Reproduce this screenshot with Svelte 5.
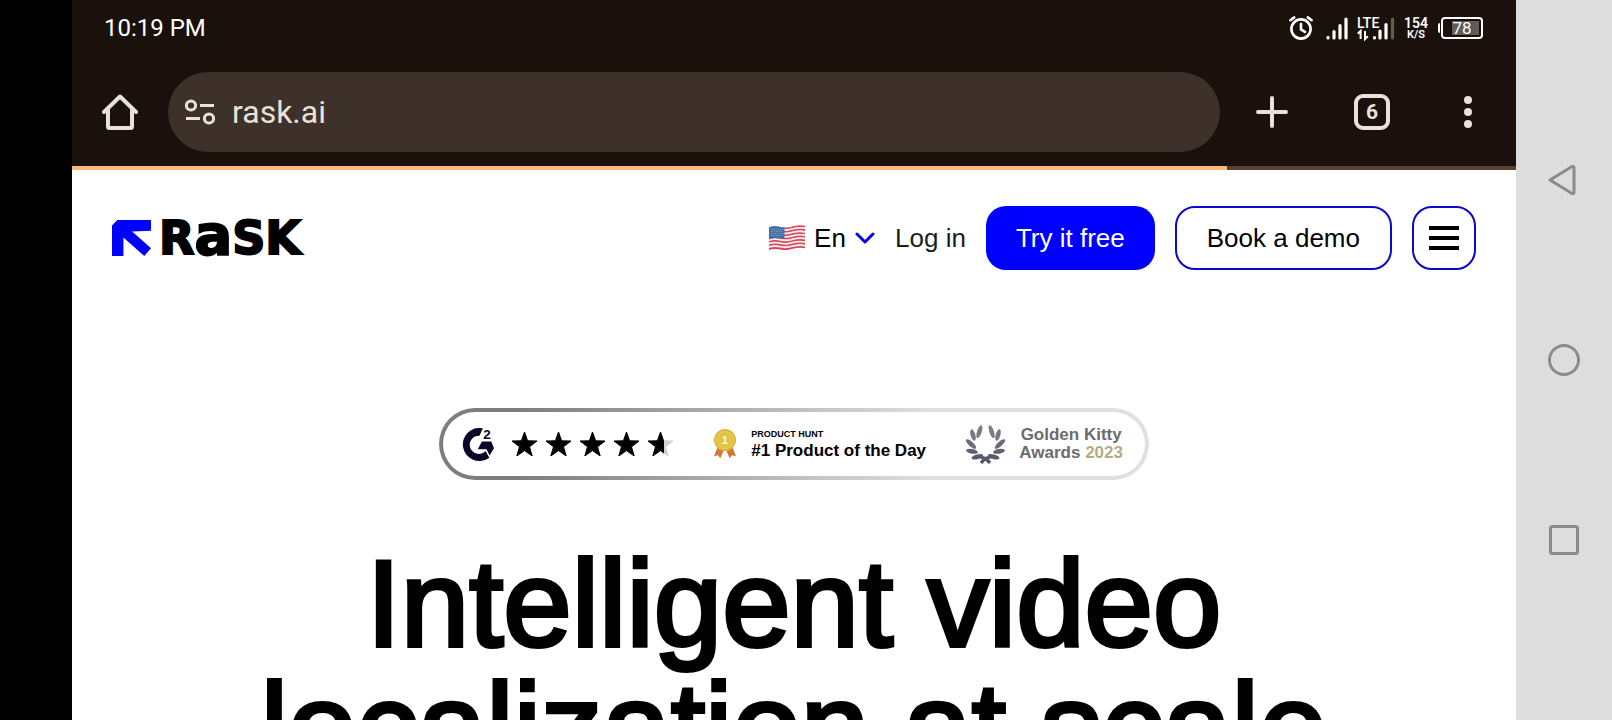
<script lang="ts">
  let url = $state("rask.ai");
  let lang = $state("En");
  let progress = $state(80);

  const tabs = 6;
  const stars = [100, 100, 100, 100, 65];
  const STAR = "M12.5 0 15.6 8.8 25 9 17.5 14.8 20.2 24 12.5 18.6 4.8 24 7.5 14.8 0 9 9.4 8.8z";

  // one side of the laurel, the other is mirrored: cx, cy, rx, rotation
  const leaves = [
    [148, 93, 20, -72],
    [129, 103, 18, 74],
    [123, 130, 20, 42],
    [126, 152, 18, 10],
    [142, 168, 18, -16],
  ];
  const stripes = Array.from({ length: 13 }, (_, i) => i);
</script>

<div class="device">
  <div class="screen">
    <div class="status">
      <span class="time">10:19 PM</span>
      <div class="tray">
        <svg class="alarm" width="24" height="24" viewBox="0 0 24 24" fill="none" stroke="#fff" stroke-width="2.6" stroke-linecap="round" aria-hidden="true">
          <circle cx="12" cy="13" r="9.600" />
          <path d="M12 8v5.400l4 2.400M1.400 4.200 5.200 1.400M22.600 4.200 18.800 1.400" />
        </svg>
        <svg class="signal" width="22" height="23" viewBox="0 0 22 23" stroke="#fff" stroke-width="3.2" stroke-linecap="round" aria-hidden="true">
          <path d="M2 20.400v.6M8 14.500V21M14 8.500V21M20 2V21" />
        </svg>
        <svg class="lte" width="38" height="23" viewBox="0 0 38 23" fill="#fff" aria-hidden="true">
          <text x="0" y="11" font-size="14" font-weight="500">LTE</text>
          <path d="M3.600 22V14L.8 16.800M8 14v8l2.800-2.800" fill="none" stroke="#fff" stroke-width="2" />
          <g stroke="#fff" stroke-width="3.2" stroke-linecap="round">
            <path d="M17.500 20.500v.5M23 14V21M29 7.500V21" />
            <path d="M35.500 2V21" stroke="#615a55" />
          </g>
        </svg>
        <div class="speed"><b>154</b><small>K/S</small></div>
        <div class="battery"><span>78</span></div>
      </div>
    </div>

    <div class="toolbar">
      <button class="tool" aria-label="Home">
        <svg width="36" height="36" viewBox="0 0 36 36" fill="none" stroke="#ebe0da" stroke-width="4" stroke-linecap="round" stroke-linejoin="round">
          <path d="M2 18 18 2.500 34 18M6 15v17.500q0 1.500 1.500 1.500h21q1.500 0 1.500-1.500V15" />
        </svg>
      </button>
      <label class="omnibox">
        <svg width="30" height="26" viewBox="0 0 30 26" fill="none" stroke="#ebe0da" stroke-width="3" aria-hidden="true">
          <circle cx="6" cy="6.500" r="4.600" />
          <circle cx="24" cy="19.500" r="4.600" />
          <path d="M15 6.500h14M1 19.500h14" />
        </svg>
        <input type="text" aria-label="Address" bind:value={url} />
      </label>
      <button class="tool wide" aria-label="New tab">
        <svg width="32" height="32" viewBox="0 0 32 32" stroke="#ebe0da" stroke-width="4" stroke-linecap="round">
          <path d="M16 2v28M2 16h28" />
        </svg>
      </button>
      <button class="tool" aria-label="Switch tabs"><span class="tabs">{tabs}</span></button>
      <button class="tool" aria-label="More">
        <svg width="8" height="32" viewBox="0 0 8 32" fill="#ebe0da">
          <circle cx="4" cy="4" r="4" /><circle cx="4" cy="16" r="4" /><circle cx="4" cy="28" r="4" />
        </svg>
      </button>
    </div>
    <div class="progress"><div class="bar" style="width:{progress}%"></div></div>

    <main>
      <header>
        <a class="logo" href="/">
          <svg width="39" height="36" viewBox="66 90 116 107" fill="#00f" aria-hidden="true">
            <path d="M66 106 82 90H182V122L126 124 182 174 162 197 100 142V197H66z" />
          </svg>
          <span>R<span class="a">a</span>SK</span>
        </a>
        <nav>
          <label class="lang">
            <svg width="36" height="26" viewBox="0 0 36 26" aria-hidden="true">
              {#each stripes as i}
                <path
                  d="M0 {3.4 + i * 1.72}c7-3 12 .6 18 0s11-3.600 18-1.600"
                  fill="none"
                  stroke={i % 2 ? "#f4eeee" : "#d8485a"}
                  stroke-width="1.9"
                />
              {/each}
              <path d="M0 2.500c6-2.600 10-.4 15.500 0V13.600c-5.500-.2-9.500-1.800-15.500.6z" fill="#3f72a8" />
              <path d="M1.500 4.500h13M2.500 6.500h12M1.500 8.500h13M2.500 10.500h12" stroke="#9db9d6" stroke-width=".8" stroke-dasharray="1 1.400" />
            </svg>
            <select aria-label="Language" bind:value={lang}>
              <option>En</option>
            </select>
            <svg width="20" height="12" viewBox="0 0 20 12" fill="none" stroke="#0000e6" stroke-width="3" stroke-linecap="round" stroke-linejoin="round" aria-hidden="true">
              <path d="M2 2l8 8 8-8" />
            </svg>
          </label>
          <a class="login" href="/login">Log in</a>
          <button class="btn primary">Try it free</button>
          <button class="btn">Book a demo</button>
          <button class="btn menu" aria-label="Menu">
            <i></i><i></i><i></i>
          </button>
        </nav>
      </header>

      <section class="hero">
        <div class="awards">
          <div class="g2">
            <svg width="32" height="33" viewBox="95 82 95 98" fill="#0a0628" aria-label="G2 rating">
              <path d="M157 83A49 49 0 1 0 176 170L165 150A27 27 0 1 1 147 105z" />
              <path d="M154 122H182L190 142 177 164 168 145H142z" />
              <text x="158" y="116" font-size="40" font-weight="700">2</text>
            </svg>
            <div class="stars">
              {#each stars as fill, i}
                <svg width="25" height="24" viewBox="0 0 25 24" aria-hidden="true">
                  <linearGradient id="star{i}">
                    <stop offset="{fill}%" stop-color="#000" />
                    <stop offset="{fill}%" stop-color={fill < 100 ? "#d0d0d0" : "#000"} />
                  </linearGradient>
                  <path d={STAR} fill="url(#star{i})" stroke="url(#star{i})" stroke-linejoin="round" />
                </svg>
              {/each}
            </div>
          </div>

          <div class="hunt">
            <svg width="24" height="30" viewBox="75 86 70 90" aria-hidden="true">
              <path d="M88 140 77 168 89 165 96 174 108 146zM132 140 143 168 131 165 124 174 112 146z" fill="#d2773a" />
              <circle cx="110" cy="119" r="33" fill="#dcb93c" />
              <circle cx="110" cy="119" r="26" fill="#e2c443" stroke="#e9d36c" stroke-width="2" />
              <text x="110" y="131" font-size="34" font-weight="700" fill="#fff6cf" text-anchor="middle">1</text>
            </svg>
            <div>
              <div class="kicker">PRODUCT HUNT</div>
              <div class="place">#1 Product of the Day</div>
            </div>
          </div>

          <div class="kitty">
            <svg width="39" height="39" viewBox="108 73 117 117" aria-hidden="true">
              <linearGradient id="laurel" gradientUnits="userSpaceOnUse" x1="0" y1="73" x2="0" y2="190">
                <stop offset="0" stop-color="#85858b" />
                <stop offset="1" stop-color="#4f5264" />
              </linearGradient>
              {#each ["", "translate(333 0) scale(-1 1)"] as side}
                <g transform={side} fill="url(#laurel)">
                  {#each leaves as [cx, cy, rx, rot]}
                    <ellipse {cx} {cy} {rx} ry="7" transform="rotate({rot} {cx} {cy})" />
                  {/each}
                  <path d="M138 166Q166 160 184 184L176 190Q164 172 138 172z" />
                </g>
              {/each}
            </svg>
            <div class="kitty-text">Golden Kitty<br />Awards <span>2023</span></div>
          </div>
        </div>

        <h1>Intelligent video<br />localization at scale</h1>
      </section>
    </main>
  </div>

  <div class="softkeys">
    <button aria-label="Back">
      <svg width="32" height="34" viewBox="0 0 32 34"><path d="M2 17 24 3.500Q26 3 26 4.500V29.500Q26 31 24 30.500z" /></svg>
    </button>
    <button aria-label="Home">
      <svg width="32" height="32" viewBox="0 0 32 32"><circle cx="16" cy="16" r="14.500" /></svg>
    </button>
    <button aria-label="Recents">
      <svg width="30" height="30" viewBox="0 0 30 30"><rect x="1.500" y="1.500" width="27" height="27" rx="2" /></svg>
    </button>
  </div>
</div>

<style>
  :global(body) {
    margin: 0;
    overflow: hidden;
    background: #000;
  }
  .device {
    display: flex;
    height: 100vh;
    padding-left: 72px;
    font-family: "Liberation Sans", Arial, sans-serif;
  }
  button {
    padding: 0;
    border: 0;
    background: none;
    font: inherit;
    cursor: pointer;
  }
  svg { flex: none; }

  .screen {
    flex: 1;
    min-width: 0;
    display: flex;
    flex-direction: column;
    background: #fff;
  }
  .status, .toolbar, .progress { flex: none; }
  main {
    flex: 1;
    min-height: 0;
    overflow: hidden;
  }

  /* system status bar */
  .status {
    display: flex;
    justify-content: space-between;
    align-items: center;
    height: 56px;
    padding: 0 33px 0 32px;
    background: #1a110c;
    color: #fff;
    font-family: Roboto, sans-serif;
  }
  .time { font-size: 24px; }
  .tray {
    display: flex;
    align-items: center;
  }
  .alarm { margin-right: 13px; }
  .signal { margin-right: 9px; }
  .lte {
    margin-right: 9px;
    overflow: visible;
  }
  .speed {
    display: flex;
    flex-direction: column;
    align-items: center;
    margin-right: 10px;
  }
  .speed b {
    font-size: 14px;
    line-height: 13px;
    font-weight: 600;
  }
  .speed small {
    font-size: 11px;
    line-height: 10px;
    font-weight: 600;
  }
  .battery {
    display: flex;
    align-items: center;
    gap: 1px;
  }
  .battery::before {
    content: "";
    width: 2px;
    height: 10px;
    border-radius: 2px 0 0 2px;
    background: #fff;
  }
  .battery span {
    box-sizing: border-box;
    width: 42px;
    height: 22px;
    padding: 2px;
    border: 2px solid #fff;
    border-radius: 4px;
    background: linear-gradient(to left, #615a55 78%, transparent 78%) content-box;
    font-size: 17px;
    line-height: 15px;
    text-align: center;
  }

  /* browser toolbar */
  .toolbar {
    display: flex;
    align-items: center;
    padding: 16px 0 14px;
    background: #1a110c;
    font-family: Roboto, sans-serif;
  }
  .tool {
    display: grid;
    place-items: center;
    width: 96px;
    height: 80px;
  }
  .tool.wide { width: 104px; }
  .omnibox {
    flex: 1;
    display: flex;
    align-items: center;
    gap: 17px;
    height: 80px;
    box-sizing: border-box;
    padding: 0 17px;
    border-radius: 40px;
    background: #3e312a;
  }
  .omnibox input {
    flex: 1;
    min-width: 0;
    padding: 0;
    border: 0;
    outline: 0;
    background: none;
    color: #ebe0da;
    font: 32px Roboto, sans-serif;
  }
  .tabs {
    box-sizing: border-box;
    width: 36px;
    height: 36px;
    border: 4px solid #ebe0da;
    border-radius: 9px;
    color: #ebe0da;
    font-size: 21px;
    line-height: 29px;
    font-weight: 700;
  }
  .progress {
    height: 4px;
    background: #59402f;
  }
  .bar {
    height: 100%;
    background: #ffb77c;
  }

  /* site */
  header {
    display: flex;
    align-items: center;
    justify-content: space-between;
    padding: 36px 40px 0;
  }
  .logo {
    display: flex;
    align-items: center;
    gap: 8px;
    color: #000;
    text-decoration: none;
    font: 700 46px/32px "DejaVu Sans", sans-serif;
    -webkit-text-stroke: 2px #000;
  }
  .logo > span { padding-bottom: 4px; }
  .a { font-size: 56px; line-height: 32px; }
  nav {
    display: flex;
    align-items: center;
    gap: 20px;
    font-size: 26px;
  }
  .lang {
    display: flex;
    align-items: center;
    gap: 9px;
  }
  .lang select {
    appearance: none;
    width: 32px;
    padding: 0;
    border: 0;
    background: none;
    color: #000;
    font: inherit;
  }
  .login {
    color: #1d1d1d;
    text-decoration: none;
  }
  .btn {
    box-sizing: border-box;
    height: 64px;
    padding: 0 30px;
    border: 2px solid #0a0ac8;
    border-radius: 20px;
    color: #000;
    white-space: nowrap;
  }
  .btn.primary {
    border: 0;
    background: #00f;
    color: #fff;
  }
  .btn.menu {
    display: flex;
    flex-direction: column;
    align-items: center;
    justify-content: center;
    gap: 6px;
    width: 64px;
    padding: 0;
  }
  .menu i {
    width: 30px;
    height: 4px;
    background: #000;
  }

  .hero {
    display: flex;
    flex-direction: column;
    align-items: center;
    padding-top: 138px;
  }
  .awards {
    box-sizing: border-box;
    display: flex;
    align-items: center;
    justify-content: space-between;
    width: 710px;
    max-width: 100%;
    height: 72px;
    padding: 0 22px 0 19px;
    border: 4px solid transparent;
    border-radius: 36px;
    background:
      linear-gradient(#fff, #fff) padding-box,
      linear-gradient(to right, #7e7e7e 12%, #e0e0e0 70%) border-box;
  }
  .g2, .hunt, .kitty {
    display: flex;
    align-items: center;
  }
  .g2 { gap: 18px; }
  .stars {
    display: flex;
    gap: 9px;
  }
  .hunt { gap: 14px; }
  .kicker {
    font-size: 9px;
    line-height: 14px;
    font-weight: 700;
  }
  .place {
    font-size: 17px;
    line-height: 20px;
    font-weight: 700;
  }
  .kitty { gap: 14px; }
  .kitty-text {
    font-size: 17px;
    line-height: 18px;
    font-weight: 700;
    text-align: center;
    color: #6c6c6c;
  }
  .kitty-text span { color: #b5ac85; }

  h1 {
    margin: 62px 0 0;
    font-size: 123px;
    line-height: 123px;
    font-weight: 400;
    text-align: center;
    white-space: nowrap;
    color: #000;
    -webkit-text-stroke: 4px #000;
  }

  /* system navigation strip */
  .softkeys {
    display: flex;
    flex-direction: column;
    justify-content: center;
    width: 96px;
    background: #ddd;
  }
  .softkeys button {
    display: grid;
    place-items: center;
    height: 25%;
  }
  .softkeys svg {
    fill: none;
    stroke: #8b8b8b;
    stroke-width: 3;
    stroke-linejoin: round;
  }
</style>
